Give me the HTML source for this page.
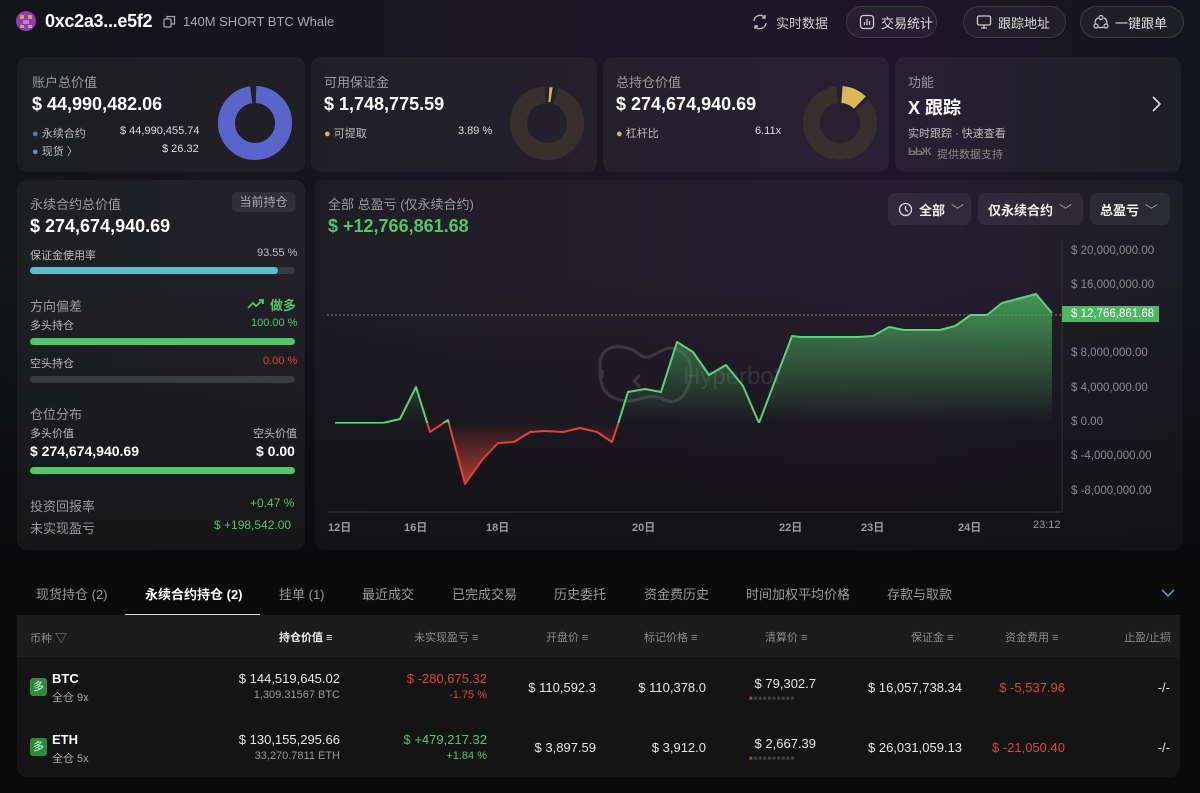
<!DOCTYPE html>
<html><head><meta charset="utf-8"><style>
*{margin:0;padding:0;box-sizing:border-box}
body{width:1200px;height:793px;overflow:hidden;background:#0a0a0b;font-family:"Liberation Sans","Noto Sans CJK SC",sans-serif;color:#e8e8e8;position:relative}
.bg{position:absolute;left:0;top:0;width:1200px;height:560px;background:linear-gradient(90deg,#121417 0%,#1a1622 45%,#1e1628 75%,#14151d 100%)}
.bg2{position:absolute;left:0;top:0;width:1200px;height:560px;background:linear-gradient(180deg,rgba(0,0,0,0) 0%,rgba(10,10,11,0.0) 50%,rgba(10,10,11,1) 100%)}
.a{position:absolute;white-space:nowrap}
.card{position:absolute;background:rgba(255,255,255,0.045);border-radius:10px}
.lbl{color:#9a9aa0;font-size:13px}
.big{font-weight:bold;font-size:18px;color:#fff}
.sm{font-size:11px;color:#bbb}
.btn{position:absolute;top:6px;height:32px;border:1px solid #3a3d3f;border-radius:16px;background:rgba(255,255,255,0.04);font-size:13px;color:#ddd;display:flex;align-items:center;gap:6px;padding-left:12px}
.bar{position:absolute;height:7px;border-radius:4px;background:#3a3b3e}
.sel{position:absolute;top:193px;height:32px;border-radius:7px;background:rgba(255,255,255,0.06);font-size:13px;font-weight:bold;color:#eee;display:flex;align-items:center;padding-left:10px;gap:6px}
.yl{position:absolute;left:1071px;font-size:11.5px;color:#8a8a90}
.xl{position:absolute;top:519px;font-size:11px;font-weight:bold;color:#9a9aa0}
.tab{position:absolute;top:584px;font-size:13px;color:#9a9a9a}
.th{position:absolute;top:629px;font-size:11px;color:#8a8a8a}
.td{position:absolute;font-size:13px;color:#e6e6e6;text-align:right}
.red{color:#e0413a}.grn{color:#4fc66a}
.tag{position:absolute;left:30px;width:17px;height:18px;border-radius:3px;background:#2f8a3a;color:#cfe;font-size:11px;text-align:center;line-height:18px}
</style></head><body>
<div class="bg"></div><div class="bg2"></div>

<!-- header -->
<svg class="a" style="left:15px;top:10px" width="22" height="22" viewBox="0 0 22 22"><circle cx="11" cy="11" r="10" fill="#8a3fb0"/><rect x="5" y="5" width="4" height="4" fill="#e0a040"/><rect x="13" y="5" width="4" height="4" fill="#e0a040"/><rect x="8" y="10" width="6" height="4" fill="#d070e0"/><rect x="5" y="15" width="4" height="3" fill="#e0a040"/><rect x="13" y="15" width="4" height="3" fill="#e0a040"/></svg>
<div class="a" style="left:45px;top:11px;font-size:18px;font-weight:bold;color:#fff;letter-spacing:-0.3px">0xc2a3...e5f2</div>
<svg class="a" style="left:163px;top:15px" width="13" height="13" viewBox="0 0 13 13" fill="none" stroke="#aaa" stroke-width="1.2"><rect x="1" y="4" width="7" height="8" rx="1"/><path d="M4 4V1.5h7.5V9H8"/></svg>
<div class="a" style="left:183px;top:14px;font-size:13px;color:#aaa">140M SHORT BTC Whale</div>

<svg class="a" style="left:751px;top:13px" width="18" height="18" viewBox="0 0 18 18" fill="none" stroke="#bbb" stroke-width="1.4"><path d="M3 8a6 6 0 0 1 11-3M15 10a6 6 0 0 1-11 3"/><path d="M14 2v3h-3M4 16v-3h3"/></svg>
<div class="a" style="left:776px;top:13px;font-size:13px;color:#ccc">实时数据</div>
<div class="btn" style="left:846px;width:91px"><svg width="16" height="16" viewBox="0 0 16 16" fill="none" stroke="#ccc" stroke-width="1.3"><rect x="1.5" y="1.5" width="13" height="13" rx="3"/><path d="M5.5 8v3M8 5v6M10.5 7v4"/></svg>交易统计</div>
<div class="btn" style="left:963px;width:103px"><svg width="16" height="16" viewBox="0 0 16 16" fill="none" stroke="#ccc" stroke-width="1.3"><rect x="1.5" y="2" width="13" height="9" rx="1.5"/><path d="M8 11v3M5 14h6"/></svg>跟踪地址</div>
<div class="btn" style="left:1080px;width:104px"><svg width="16" height="16" viewBox="0 0 16 16" fill="none" stroke="#ccc" stroke-width="1.2"><circle cx="8" cy="3.5" r="2"/><circle cx="3" cy="12" r="2"/><circle cx="13" cy="12" r="2"/><path d="M5 3.8A6 6 0 0 0 2 9.5M11 3.8A6 6 0 0 1 14 9.5M5.3 13.5h5.4"/></svg>一键跟单</div>

<!-- top cards -->
<div class="card" style="left:17px;top:57px;width:288px;height:115px"></div>
<div class="card" style="left:311px;top:57px;width:286px;height:115px"></div>
<div class="card" style="left:603px;top:57px;width:286px;height:115px"></div>
<div class="card" style="left:895px;top:57px;width:286px;height:115px"></div>

<div class="a lbl" style="left:32px;top:72px">账户总价值</div>
<div class="a big" style="left:32px;top:94px">$ 44,990,482.06</div>
<div class="a sm" style="left:32px;top:125px"><span style="color:#5b6fd6">●</span> 永续合约</div>
<div class="a sm" style="left:120px;top:125px;color:#ddd">$ 44,990,455.74</div>
<div class="a sm" style="left:32px;top:143px"><span style="color:#5b8fd6">●</span> 现货 〉</div>
<div class="a sm" style="left:162px;top:143px;color:#ddd">$ 26.32</div>
<svg class="a" style="left:215px;top:83px" width="80" height="80" viewBox="0 0 80 80"><circle cx="40" cy="40" r="28.5" fill="none" stroke="#5a65cc" stroke-width="17" stroke-dasharray="174 5" stroke-dashoffset="-1" transform="rotate(-90 40 40)"/></svg>

<div class="a lbl" style="left:324px;top:72px">可用保证金</div>
<div class="a big" style="left:324px;top:94px">$ 1,748,775.59</div>
<div class="a sm" style="left:324px;top:125px"><span style="color:#d9b85a">●</span> 可提取</div>
<div class="a sm" style="left:458px;top:125px;color:#ddd">3.89 %</div>
<svg class="a" style="left:507px;top:83px" width="80" height="80" viewBox="0 0 80 80"><circle cx="40" cy="40" r="28.5" fill="none" stroke="#37302d" stroke-width="17" stroke-dasharray="168 11" stroke-dashoffset="-9" transform="rotate(-90 40 40)"/><circle cx="40" cy="40" r="28.5" fill="none" stroke="#d9b85a" stroke-width="15" stroke-dasharray="2.5 176.5" stroke-dashoffset="-2" transform="rotate(-90 40 40)"/></svg>

<div class="a lbl" style="left:616px;top:72px">总持仓价值</div>
<div class="a big" style="left:616px;top:94px">$ 274,674,940.69</div>
<div class="a sm" style="left:616px;top:125px"><span style="color:#d9b85a">●</span> 杠杆比</div>
<div class="a sm" style="left:755px;top:125px;color:#ddd">6.11x</div>
<svg class="a" style="left:800px;top:83px" width="80" height="80" viewBox="0 0 80 80"><circle cx="40" cy="40" r="28.5" fill="none" stroke="#37302d" stroke-width="17" stroke-dasharray="151 28" stroke-dashoffset="-25" transform="rotate(-90 40 40)"/><circle cx="40" cy="40" r="28.5" fill="none" stroke="#d9b85a" stroke-width="17" stroke-dasharray="20 159" stroke-dashoffset="-2" transform="rotate(-90 40 40)"/></svg>

<div class="a lbl" style="left:908px;top:72px">功能</div>
<div class="a big" style="left:908px;top:94px">X 跟踪</div>
<svg class="a" style="left:1150px;top:95px" width="12" height="18" viewBox="0 0 12 18" fill="none" stroke="#ddd" stroke-width="1.6"><path d="M3 2l7 7-7 7"/></svg>
<div class="a sm" style="left:908px;top:125px">实时跟踪 · 快速查看</div>
<div class="a" style="left:908px;top:146px;font-size:11px;font-weight:bold;color:#777;letter-spacing:-1px">ЬЬЖ</div>
<div class="a sm" style="left:937px;top:146px;color:#888">提供数据支持</div>

<!-- left panel -->
<div class="card" style="left:17px;top:180px;width:288px;height:370px;background:rgba(255,255,255,0.05)"></div>
<div class="a lbl" style="left:30px;top:194px">永续合约总价值</div>
<div class="a" style="left:232px;top:192px;width:63px;height:20px;border-radius:4px;background:rgba(255,255,255,0.07);font-size:12px;color:#aaa;text-align:center;line-height:20px">当前持仓</div>
<div class="a big" style="left:30px;top:216px">$ 274,674,940.69</div>
<div class="a sm" style="left:30px;top:247px">保证金使用率</div>
<div class="a sm" style="left:257px;top:247px">93.55 %</div>
<div class="bar" style="left:30px;top:267px;width:265px"></div><div class="bar" style="left:30px;top:267px;width:248px;background:#5bbccc"></div>
<div class="a lbl" style="left:30px;top:296px">方向偏差</div>
<svg class="a" style="left:247px;top:298px" width="18" height="12" viewBox="0 0 18 12" fill="none" stroke="#4fc66a" stroke-width="1.8"><path d="M1 10l5-5 3 3 7-6M12 2h4v4"/></svg>
<div class="a grn" style="left:270px;top:295px;font-size:13px;font-weight:bold">做多</div>
<div class="a sm" style="left:30px;top:317px">多头持仓</div>
<div class="a sm grn" style="left:251px;top:317px">100.00 %</div>
<div class="bar" style="left:30px;top:338px;width:265px;background:#4fc66a"></div>
<div class="a sm" style="left:30px;top:355px">空头持仓</div>
<div class="a sm red" style="left:263px;top:355px">0.00 %</div>
<div class="bar" style="left:30px;top:376px;width:265px"></div>
<div class="a lbl" style="left:30px;top:404px">仓位分布</div>
<div class="a sm" style="left:30px;top:425px">多头价值</div>
<div class="a sm" style="left:253px;top:425px">空头价值</div>
<div class="a" style="left:30px;top:443px;font-size:14px;font-weight:bold;color:#fff">$ 274,674,940.69</div>
<div class="a" style="left:256px;top:443px;font-size:14px;font-weight:bold;color:#fff">$ 0.00</div>
<div class="bar" style="left:30px;top:467px;width:265px;background:#4fc66a"></div>
<div class="a lbl" style="left:30px;top:496px">投资回报率</div>
<div class="a grn" style="left:250px;top:496px;font-size:12px">+0.47 %</div>
<div class="a lbl" style="left:30px;top:518px">未实现盈亏</div>
<div class="a grn" style="left:214px;top:518px;font-size:12px">$ +198,542.00</div>

<!-- chart panel -->
<div class="card" style="left:315px;top:180px;width:868px;height:370px;background:rgba(255,255,255,0.035)"></div>
<div class="a lbl" style="left:328px;top:194px">全部 总盈亏 (仅永续合约)</div>
<div class="a grn" style="left:328px;top:216px;font-size:18px;font-weight:bold">$ +12,766,861.68</div>
<div class="sel" style="left:888px;width:83px"><svg width="15" height="15" viewBox="0 0 15 15" fill="none" stroke="#ddd" stroke-width="1.3"><circle cx="7.5" cy="7.5" r="6"/><path d="M7.5 4v3.5l2.5 2"/></svg>全部 <span style="color:#999;font-weight:normal">﹀</span></div>
<div class="sel" style="left:978px;width:105px">仅永续合约 <span style="color:#999;font-weight:normal">﹀</span></div>
<div class="sel" style="left:1090px;width:80px">总盈亏 <span style="color:#999;font-weight:normal">﹀</span></div>

<svg class="a" style="left:0;top:0" width="1200" height="560">
<defs>
<linearGradient id="gg" x1="0" y1="290" x2="0" y2="423" gradientUnits="userSpaceOnUse"><stop offset="0" stop-color="#4caf5e" stop-opacity="0.85"/><stop offset="1" stop-color="#4caf5e" stop-opacity="0"/></linearGradient>
<linearGradient id="rg" x1="0" y1="423" x2="0" y2="485" gradientUnits="userSpaceOnUse"><stop offset="0" stop-color="#e0413a" stop-opacity="0"/><stop offset="1" stop-color="#e0413a" stop-opacity="0.8"/></linearGradient>
<clipPath id="up"><rect x="0" y="0" width="1200" height="423"/></clipPath>
<clipPath id="dn"><rect x="0" y="423" width="1200" height="200"/></clipPath>
</defs>
<line x1="1062" y1="240" x2="1062" y2="512" stroke="#34343c"/>
<line x1="327" y1="512" x2="1062" y2="512" stroke="#34343c"/>
<line x1="327" y1="315" x2="1062" y2="315" stroke="#9bb28a" stroke-width="0.8" stroke-dasharray="2 2"/>
<g opacity="0.12" fill="none" stroke="#fff" stroke-width="3"><path d="M600 365c0-25 30-20 40-10c15 10 25-20 45 0c15 15 0 55-20 45c-20-10-25 5-45 0c-20-5-20-20-20-35z"/><path d="M602 370v8M640 375l-6 6 6 6"/></g>
<text x="683" y="384" fill="#fff" opacity="0.1" font-size="24" font-family="Liberation Sans">Hyperbot</text>
<polygon points="335,423 383,423 400,419 416,387 430,432 448,420 465,484 482,460 498,443 514,442 530,432 546,431 563,432 580,428 597,432 612,442 618,424 628,392 645,389 661,392 677,342 693,352 709,375 726,365 743,386 759,423 792,336 800,337 858,337 873,336 889,327 904,330 940,330 955,326 971,315 987,315 1002,303 1036,294 1052,313 1052,423" fill="url(#gg)" clip-path="url(#up)"/>
<polygon points="335,423 383,423 400,419 416,387 430,432 448,420 465,484 482,460 498,443 514,442 530,432 546,431 563,432 580,428 597,432 612,442 618,424 628,392 645,389 661,392 677,342 693,352 709,375 726,365 743,386 759,423 792,336 800,337 858,337 873,336 889,327 904,330 940,330 955,326 971,315 987,315 1002,303 1036,294 1052,313 1052,423" fill="url(#rg)" clip-path="url(#dn)"/>
<polyline points="335,423 383,423 400,419 416,387 430,432 448,420 465,484 482,460 498,443 514,442 530,432 546,431 563,432 580,428 597,432 612,442 618,424 628,392 645,389 661,392 677,342 693,352 709,375 726,365 743,386 759,423 792,336 800,337 858,337 873,336 889,327 904,330 940,330 955,326 971,315 987,315 1002,303 1036,294 1052,313" fill="none" stroke="#5fd07a" stroke-width="2" stroke-linejoin="round" clip-path="url(#up)"/>
<polyline points="335,423 383,423 400,419 416,387 430,432 448,420 465,484 482,460 498,443 514,442 530,432 546,431 563,432 580,428 597,432 612,442 618,424 628,392" fill="none" stroke="#e0413a" stroke-width="2" stroke-linejoin="round" clip-path="url(#dn)"/>
</svg>
<div class="yl" style="top:245px">$ 20,000,000.00</div>
<div class="yl" style="top:279px">$ 16,000,000.00</div>
<div class="yl" style="top:347px">$ 8,000,000.00</div>
<div class="yl" style="top:382px">$ 4,000,000.00</div>
<div class="yl" style="top:416px">$ 0.00</div>
<div class="yl" style="top:450px">$ -4,000,000.00</div>
<div class="yl" style="top:485px">$ -8,000,000.00</div>
<div class="a" style="left:1062px;top:306px;width:97px;height:16px;background:#4cb862;color:#fff;font-size:11.5px;line-height:16px;padding-left:9px">$ 12,766,861.68</div>
<div class="xl" style="left:328px">12日</div><div class="xl" style="left:404px">16日</div><div class="xl" style="left:486px">18日</div><div class="xl" style="left:632px">20日</div><div class="xl" style="left:779px">22日</div><div class="xl" style="left:861px">23日</div><div class="xl" style="left:958px">24日</div><div class="xl" style="left:1033px;font-weight:normal">23:12</div>

<!-- tabs -->
<div class="tab" style="left:36px">现货持仓 (2)</div>
<div class="tab" style="left:145px;color:#fff;font-weight:bold">永续合约持仓 (2)</div>
<div class="a" style="left:125px;top:614px;width:135px;height:2px;background:#ddd"></div>
<div class="tab" style="left:279px">挂单 (1)</div>
<div class="tab" style="left:362px">最近成交</div>
<div class="tab" style="left:452px">已完成交易</div>
<div class="tab" style="left:554px">历史委托</div>
<div class="tab" style="left:644px">资金费历史</div>
<div class="tab" style="left:746px">时间加权平均价格</div>
<div class="tab" style="left:887px">存款与取款</div>
<svg class="a" style="left:1161px;top:589px" width="14" height="9" viewBox="0 0 14 9" fill="none" stroke="#5aa8c8" stroke-width="1.5"><path d="M1 1l6 6 6-6"/></svg>

<!-- table -->
<div class="a" style="left:17px;top:615px;width:1163px;height:162px;background:#141415;border-radius:0 0 10px 10px"></div>
<div class="a" style="left:17px;top:615px;width:1163px;height:42px;background:#1c1c1d"></div>
<div class="th" style="left:30px">币种 <span style="font-size:12px">▽</span></div>
<div class="th" style="left:279px;color:#eee;font-weight:bold">持仓价值 ≡</div>
<div class="th" style="left:414px">未实现盈亏 ≡</div>
<div class="th" style="left:546px">开盘价 ≡</div>
<div class="th" style="left:644px">标记价格 ≡</div>
<div class="th" style="left:765px">清算价 ≡</div>
<div class="th" style="left:911px">保证金 ≡</div>
<div class="th" style="left:1005px">资金费用 ≡</div>
<div class="th" style="left:1124px">止盈/止损</div>

<div class="tag" style="top:678px">多</div>
<div class="a" style="left:52px;top:671px;font-size:13px;font-weight:bold;color:#fff">BTC</div>
<div class="a" style="left:52px;top:689px;font-size:11px;color:#aaa">全仓 9x</div>
<div class="td" style="right:860px;top:671px">$ 144,519,645.02</div>
<div class="td" style="right:860px;top:689px;font-size:11px;color:#999">1,309.31567 BTC</div>
<div class="td red" style="right:713px;top:671px">$ -280,675.32</div>
<div class="td red" style="right:713px;top:689px;font-size:11px">-1.75 %</div>
<div class="td" style="right:604px;top:680px">$ 110,592.3</div>
<div class="td" style="right:494px;top:680px">$ 110,378.0</div>
<div class="td" style="right:384px;top:676px">$ 79,302.7</div>
<div class="a" style="left:749px;top:696px;font-size:6px;color:#444;letter-spacing:1px"><span style="color:#8a5a30">■</span>■■■■■■■■■</div>
<div class="td" style="right:238px;top:680px">$ 16,057,738.34</div>
<div class="td red" style="right:135px;top:680px">$ -5,537.96</div>
<div class="td" style="right:30px;top:680px">-/-</div>

<div class="tag" style="top:738px">多</div>
<div class="a" style="left:52px;top:732px;font-size:13px;font-weight:bold;color:#fff">ETH</div>
<div class="a" style="left:52px;top:750px;font-size:11px;color:#aaa">全仓 5x</div>
<div class="td" style="right:860px;top:732px">$ 130,155,295.66</div>
<div class="td" style="right:860px;top:750px;font-size:11px;color:#999">33,270.7811 ETH</div>
<div class="td grn" style="right:713px;top:732px">$ +479,217.32</div>
<div class="td grn" style="right:713px;top:750px;font-size:11px">+1.84 %</div>
<div class="td" style="right:604px;top:740px">$ 3,897.59</div>
<div class="td" style="right:494px;top:740px">$ 3,912.0</div>
<div class="td" style="right:384px;top:736px">$ 2,667.39</div>
<div class="a" style="left:749px;top:756px;font-size:6px;color:#444;letter-spacing:1px"><span style="color:#8a5a30">■</span>■■■■■■■■■</div>
<div class="td" style="right:238px;top:740px">$ 26,031,059.13</div>
<div class="td red" style="right:135px;top:740px">$ -21,050.40</div>
<div class="td" style="right:30px;top:740px">-/-</div>
</body></html>
